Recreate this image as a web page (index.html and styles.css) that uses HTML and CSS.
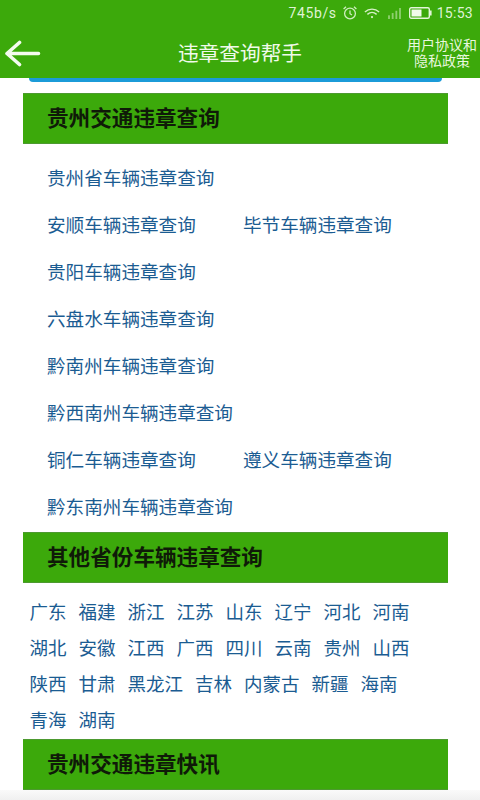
FILE: index.html
```html
<!DOCTYPE html>
<html lang="zh">
<head>
<meta charset="utf-8">
<title>违章查询帮手</title>
<link rel="stylesheet" href="styles.css">
</head>
<body>
<header class="appbar">
  <div class="status">
    <span class="speed">745b/s</span>
    <svg class="ic-alarm" width="16" height="16" viewBox="0 0 16 16" fill="none" stroke="#cfeec0" stroke-width="1.3"><circle cx="8" cy="8.5" r="5.4"/><path d="M8 5.5V8.7L10 10M1.6 4 4 1.8M14.4 4 12 1.8"/></svg>
    <svg class="ic-wifi" width="16" height="13" viewBox="0 0 18 14" fill="none" stroke="#d6f0c8" stroke-width="1.600"><path d="M1 5.200C5.500 1 12.500 1 17 5.200M3.800 8C7 5.200 11 5.200 14.200 8"/><circle cx="9" cy="11" r="1.300" fill="#d6f0c8" stroke="none"/></svg>
    <svg class="ic-signal" width="15" height="11" viewBox="0 0 16 12" fill="#8fd06f"><rect x="1" y="8" width="2" height="4"/><rect x="5" y="5.500" width="2" height="6.500"/><rect x="9" y="3" width="2" height="9"/><rect x="13" y="0" width="2" height="12"/></svg>
    <svg class="ic-batt" width="23" height="12" viewBox="0 0 23 12"><rect x="0.700" y="0.700" width="19.600" height="10.600" rx="1.500" fill="none" stroke="#e4f5da" stroke-width="1.400"/><rect x="2.500" y="2.500" width="10" height="7" fill="#f2fbec"/><rect x="21" y="3.500" width="1.600" height="5" fill="#e4f5da"/></svg>
    <span class="clock">15:53</span>
  </div>
  <div class="titlebar">
    <svg class="back" width="37" height="27" viewBox="0 0 37 27" fill="none" stroke="#f4fbef" stroke-width="3.600" stroke-linecap="round" stroke-linejoin="round"><path d="M34.500 13.500H3M15.500 2.500 3 13.500 15.500 24.500"/></svg>
    <h1 class="title">违章查询帮手</h1>
    <div class="policy">用户协议和<br>隐私政策</div>
  </div>
</header>
<main class="content">
  <div class="strip"></div>
  <section class="block first">
    <h2 class="head">贵州交通违章查询</h2>
    <ul class="links">
      <li class="row"><a>贵州省车辆违章查询</a></li>
      <li class="row"><a class="fixed">安顺车辆违章查询</a><a>毕节车辆违章查询</a></li>
      <li class="row"><a>贵阳车辆违章查询</a></li>
      <li class="row"><a>六盘水车辆违章查询</a></li>
      <li class="row"><a>黔南州车辆违章查询</a></li>
      <li class="row"><a>黔西南州车辆违章查询</a></li>
      <li class="row"><a class="fixed">铜仁车辆违章查询</a><a>遵义车辆违章查询</a></li>
      <li class="row"><a>黔东南州车辆违章查询</a></li>
    </ul>
  </section>
  <section class="block">
    <h2 class="head">其他省份车辆违章查询</h2>
    <div class="provinces">
      <a>广东</a><a>福建</a><a>浙江</a><a>江苏</a><a>山东</a><a>辽宁</a><a>河北</a><a>河南</a>
      <a>湖北</a><a>安徽</a><a>江西</a><a>广西</a><a>四川</a><a>云南</a><a>贵州</a><a>山西</a>
      <a>陕西</a><a>甘肃</a><a>黑龙江</a><a>吉林</a><a>内蒙古</a><a>新疆</a><a>海南</a>
      <a>青海</a><a>湖南</a>
    </div>
  </section>
  <section class="block">
    <h2 class="head">贵州交通违章快讯</h2>
  </section>
  <div class="fade"></div>
</main>
</body>
</html>
```
FILE: styles.css
```css
* { box-sizing: border-box; }
html, body { margin: 0; padding: 0; }
body {
  width: 480px;
  height: 800px;
  overflow: hidden;
  background: #fff;
  font-family: "Noto Sans CJK SC", "Liberation Sans", sans-serif;
}
.appbar { height: 78px; background: #3ca90b; color: #f0faea; }
.status {
  height: 26px;
  display: flex;
  align-items: center;
  justify-content: flex-end;
  padding-right: 7px;
  font-family: Roboto, "Liberation Sans", sans-serif;
  font-size: 14px;
  color: #dff3d4;
}
.speed { margin-right: 5px; letter-spacing: .6px; }
.ic-alarm { margin-right: 6px; }
.ic-wifi { margin-right: 7px; }
.ic-signal { margin-right: 7px; }
.ic-batt { margin-right: 5px; }
.clock { letter-spacing: .3px; }
.titlebar {
  height: 52px;
  display: grid;
  grid-template-columns: 1fr auto 1fr;
  align-items: center;
}
.back { margin: 3px 0 0 4px; }
.title {
  margin: 0;
  text-align: center;
  font-size: 20.700px;
  font-weight: 400;
  line-height: 52px;
}
.policy {
  justify-self: end;
  margin: 1px 3px 0 0;
  width: 70px;
  text-align: center;
  font-family: "Liberation Sans", "Noto Sans CJK SC", sans-serif;
  font-size: 14px;
  line-height: 16px;
  color: #e8f7df;
}
.content { position: relative; height: 722px; padding: 0 32px 0 23px; }
.strip {
  position: absolute;
  left: 29px;
  top: 0;
  width: 413px;
  height: 4px;
  background: #1b9bd8;
  border-radius: 0 0 4px 4px;
}
.block.first { padding-top: 15px; }
.head {
  margin: 0;
  height: 51px;
  padding-left: 24px;
  background: #3ca90b;
  color: #0f1a08;
  font-size: 21.600px;
  font-weight: 700;
  line-height: 48px;
  box-shadow: inset 0 1px 0 #4d9a30, inset 0 -1px 0 #4d9a30;
}
.links { list-style: none; margin: 0; padding: 9px 0 3px 24px; }
.row { display: flex; height: 47px; align-items: center; }
.links a, .provinces a { color: #1b5c92; font-size: 18.600px; line-height: 24px; white-space: nowrap; }
.links a.fixed { width: 196px; }
.provinces {
  display: flex;
  flex-wrap: wrap;
  column-gap: 12px;
  padding: 10px 0 2px 6.500px;
  width: 400px;
}
.provinces a { font-size: 18.500px; height: 36px; line-height: 36px; }
.fade {
  position: absolute;
  left: 0;
  right: 0;
  bottom: 0;
  height: 10px;
  background: linear-gradient(#fafafa, #f0f0f0);
  z-index: -1;
}
```
